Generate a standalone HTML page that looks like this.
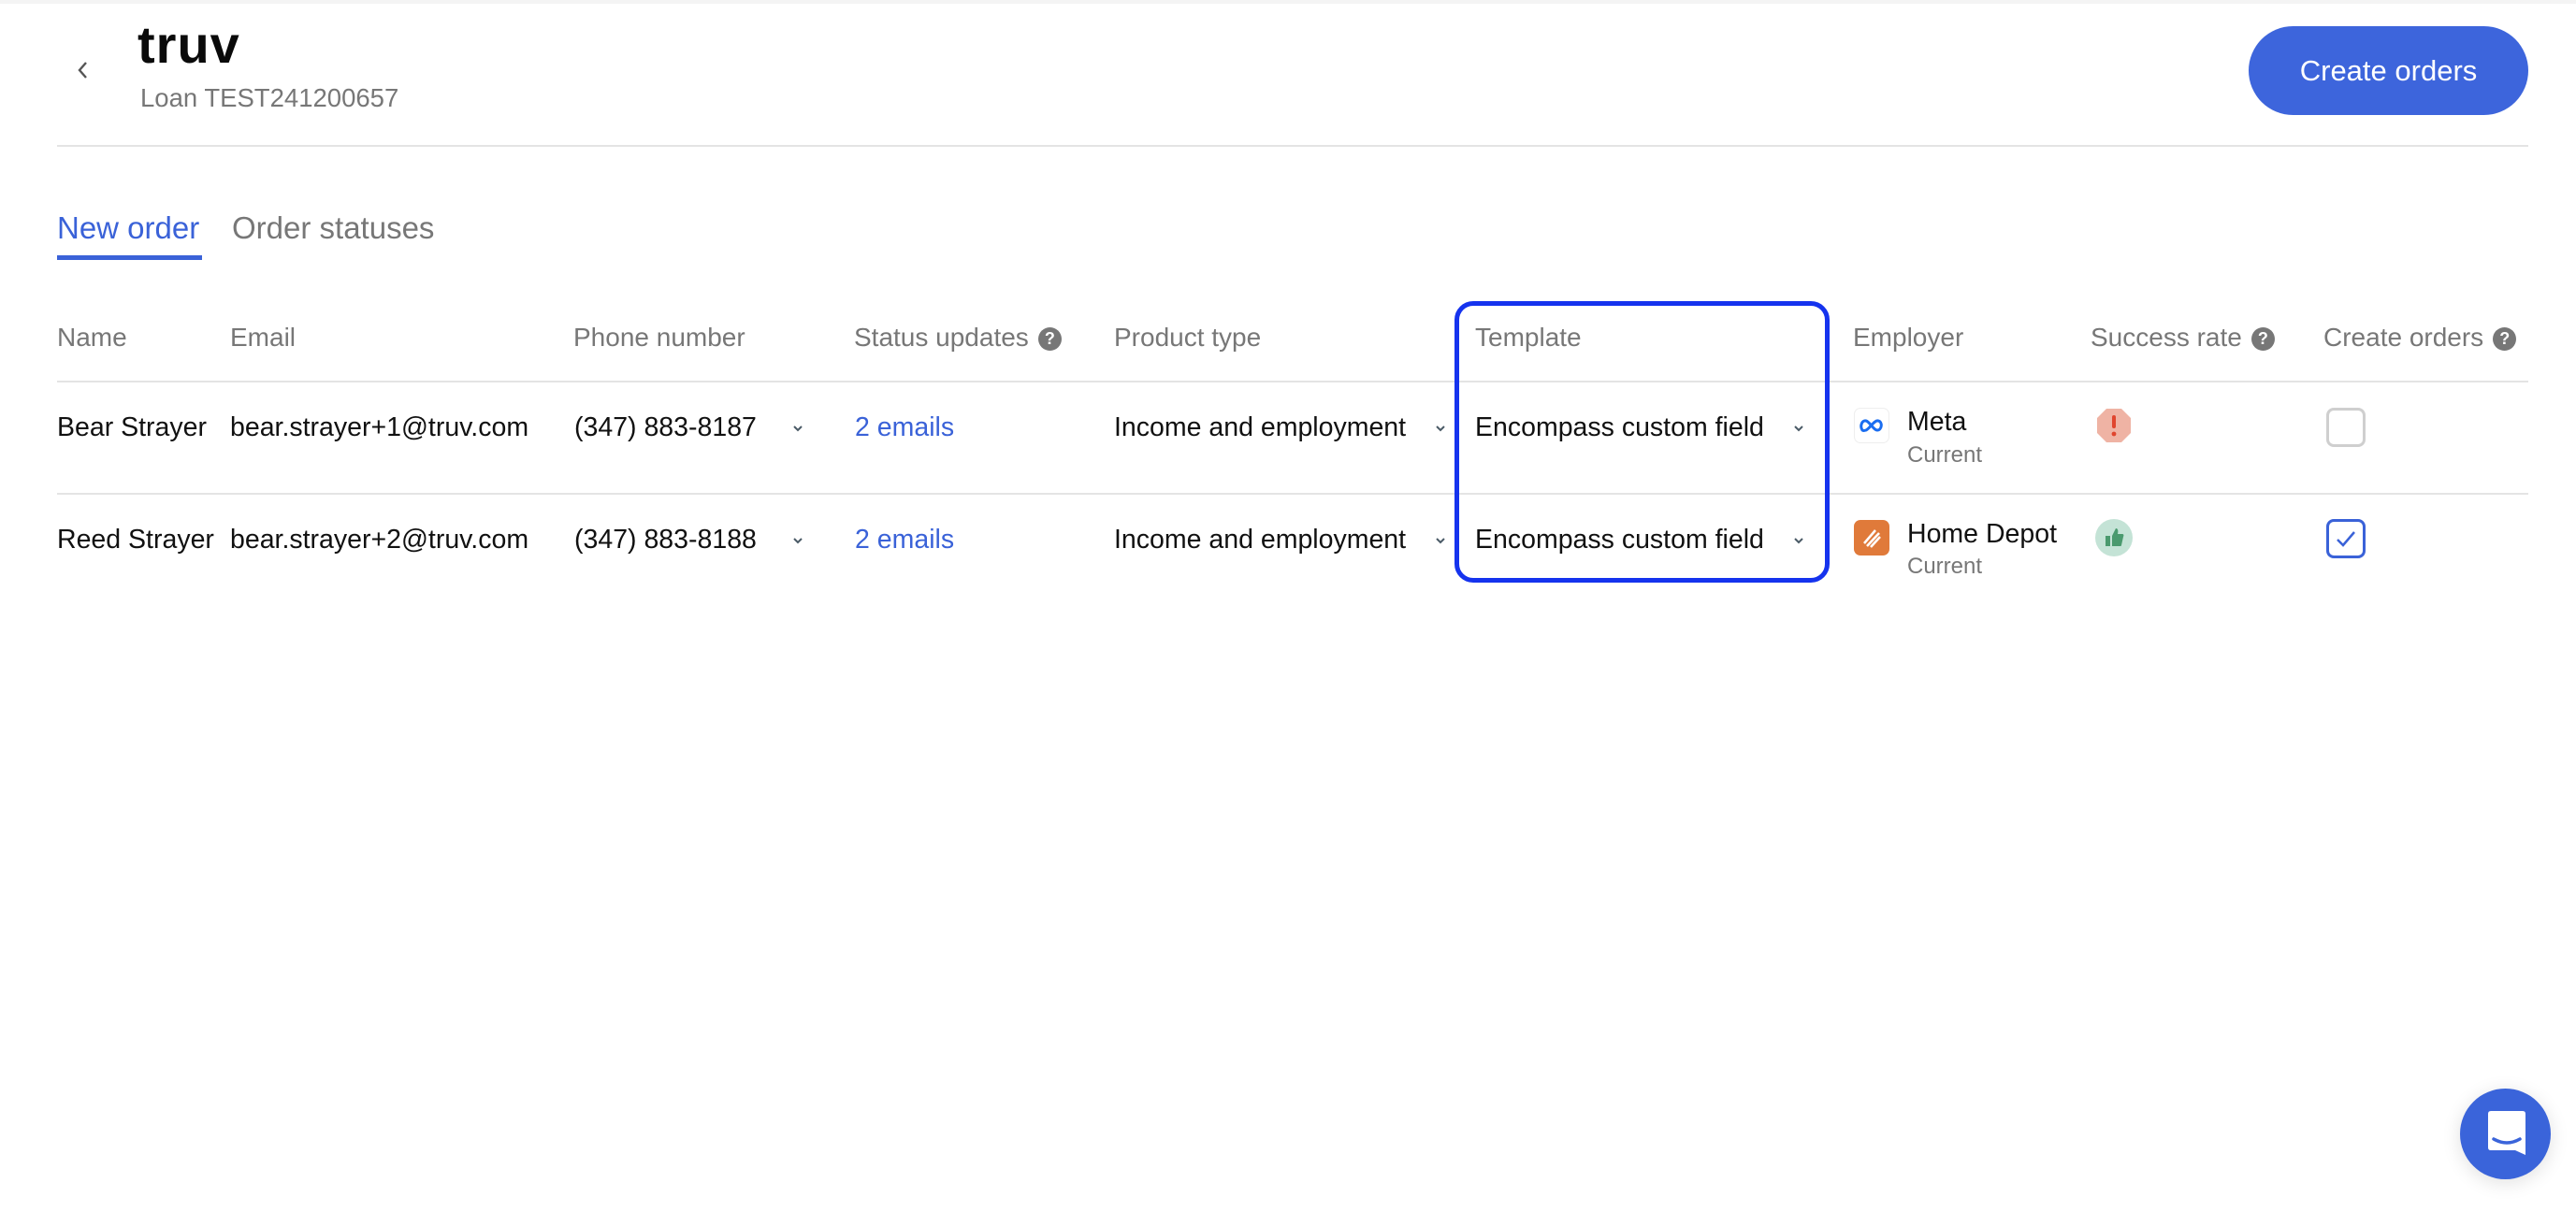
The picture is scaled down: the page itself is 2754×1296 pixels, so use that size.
<!DOCTYPE html>
<html><head><meta charset="utf-8"><style>
*{margin:0;padding:0;box-sizing:border-box}
body{width:2754px;height:1296px;background:#fff;font-family:"Liberation Sans",sans-serif;position:relative;overflow:hidden;color:#111}
.a{position:absolute;white-space:nowrap}
.h{font-size:28px;color:#777;line-height:1}
.t{font-size:28.5px;color:#111;line-height:1}
.q{display:inline-block;width:25px;height:25px;border-radius:50%;background:#777;color:#fff;font-size:18px;font-weight:bold;text-align:center;line-height:25px;vertical-align:2px;margin-left:10px}
.chev{position:absolute;width:12px;height:12px}
.line{position:absolute;left:61px;width:2642px;height:2px;background:#e4e4e4}
.sub{font-size:24px;color:#777;line-height:1}
</style></head><body>
<div class="a" style="left:0;top:0;width:2754px;height:4px;background:#f4f4f4"></div>
<svg class="a" style="left:80px;top:64px" width="16" height="22" viewBox="0 0 16 22"><path d="M12 3 L5 11 L12 19" fill="none" stroke="#555" stroke-width="2.4"/></svg>
<div class="a" style="left:147px;top:20px;font-size:56px;font-weight:bold;letter-spacing:1px;line-height:1;color:#0a0a0a">truv</div>
<div class="a" style="left:150px;top:91px;font-size:27.5px;color:#777;line-height:1">Loan TEST241200657</div>
<div class="a" style="left:2404px;top:28px;width:299px;height:95px;border-radius:48px;background:#3d65dc;color:#fff;font-size:31px;text-align:center;line-height:95px">Create orders</div>
<div class="line" style="top:155px"></div>
<div class="a" style="left:61px;top:227px;font-size:33px;color:#3a62d8;line-height:1">New order</div>
<div class="a" style="left:61px;top:273px;width:155px;height:5px;background:#3a62d8"></div>
<div class="a" style="left:248px;top:227px;font-size:33px;color:#777;line-height:1">Order statuses</div>

<div class="a h" style="left:61px;top:347px">Name</div>
<div class="a h" style="left:246px;top:347px">Email</div>
<div class="a h" style="left:613px;top:347px">Phone number</div>
<div class="a h" style="left:913px;top:347px">Status updates<span class="q">?</span></div>
<div class="a h" style="left:1191px;top:347px">Product type</div>
<div class="a h" style="left:1577px;top:347px">Template</div>
<div class="a h" style="left:1981px;top:347px">Employer</div>
<div class="a h" style="left:2235px;top:347px">Success rate<span class="q">?</span></div>
<div class="a h" style="left:2484px;top:347px">Create orders<span class="q">?</span></div>
<div class="line" style="top:407px"></div>

<div class="a t" style="left:61px;top:443px">Bear Strayer</div>
<div class="a t" style="left:246px;top:443px">bear.strayer+1@truv.com</div>
<div class="a t" style="left:614px;top:443px">(347) 883-8187</div>
<div class="a t" style="left:914px;top:443px;color:#3a62d8">2 emails</div>
<div class="a t" style="left:1191px;top:443px">Income and employment</div>
<div class="a t" style="left:1577px;top:443px">Encompass custom field</div>
<div class="line" style="top:527px"></div>
<div class="a t" style="left:61px;top:563px">Reed Strayer</div>
<div class="a t" style="left:246px;top:563px">bear.strayer+2@truv.com</div>
<div class="a t" style="left:614px;top:563px">(347) 883-8188</div>
<div class="a t" style="left:914px;top:563px;color:#3a62d8">2 emails</div>
<div class="a t" style="left:1191px;top:563px">Income and employment</div>
<div class="a t" style="left:1577px;top:563px">Encompass custom field</div>

<svg class="chev" style="left:847px;top:452px" viewBox="0 0 12 12"><path d="M2 4 L6 8 L10 4" fill="none" stroke="#4a5a66" stroke-width="2"/></svg>
<svg class="chev" style="left:847px;top:572px" viewBox="0 0 12 12"><path d="M2 4 L6 8 L10 4" fill="none" stroke="#4a5a66" stroke-width="2"/></svg>
<svg class="chev" style="left:1534px;top:452px" viewBox="0 0 12 12"><path d="M2 4 L6 8 L10 4" fill="none" stroke="#4a5a66" stroke-width="2"/></svg>
<svg class="chev" style="left:1534px;top:572px" viewBox="0 0 12 12"><path d="M2 4 L6 8 L10 4" fill="none" stroke="#4a5a66" stroke-width="2"/></svg>
<svg class="chev" style="left:1917px;top:452px" viewBox="0 0 12 12"><path d="M2 4 L6 8 L10 4" fill="none" stroke="#4a5a66" stroke-width="2"/></svg>
<svg class="chev" style="left:1917px;top:572px" viewBox="0 0 12 12"><path d="M2 4 L6 8 L10 4" fill="none" stroke="#4a5a66" stroke-width="2"/></svg>

<div class="a" style="left:1555px;top:322px;width:401px;height:301px;border:5px solid #1533ee;border-radius:20px"></div>

<div class="a" style="left:1982px;top:436px;width:38px;height:38px;border:1px solid #eee;border-radius:7px;background:#fff"></div>
<svg class="a" style="left:1987px;top:446px" width="28" height="18" viewBox="0 0 28 18"><path d="M4 14 C1 9 4 3 8 4 C12 5 16 14 20 14 C25 14 26 5 21 4 C17 3 12 12 8 14 C5 15 4 14 4 14Z" fill="none" stroke="#1a6df0" stroke-width="3"/></svg>
<div class="a" style="left:2039px;top:437px;font-size:28.5px;line-height:1">Meta</div>
<div class="a sub" style="left:2039px;top:475px">Current</div>
<div class="a" style="left:1982px;top:556px;width:38px;height:38px;border-radius:7px;background:#e07a3a"></div>
<svg class="a" style="left:1987px;top:561px" width="28" height="28" viewBox="0 0 28 28"><g stroke="#fff" stroke-width="2.5"><path d="M6 20 L18 6"/><path d="M9 23 L22 9"/><path d="M13 24 L23 13"/></g></svg>
<div class="a" style="left:2039px;top:557px;font-size:28.5px;line-height:1">Home Depot</div>
<div class="a sub" style="left:2039px;top:594px">Current</div>

<svg class="a" style="left:2241px;top:436px" width="38" height="38" viewBox="0 0 38 38"><polygon points="11,1 27,1 37,11 37,27 27,37 11,37 1,27 1,11" fill="#efb3a4"/><rect x="17" y="8" width="4" height="14" rx="2" fill="#e0452e"/><circle cx="19" cy="28" r="2.4" fill="#e0452e"/></svg>
<svg class="a" style="left:2240px;top:555px" width="40" height="40" viewBox="0 0 40 40"><circle cx="20" cy="20" r="20" fill="#c4e3d6"/><rect x="11" y="18" width="5" height="11" fill="#4a9a6e"/><path d="M18 18 L22 10 C24 10 25 12 24 16 L29 16 C30 16 31 17 30 19 L28 28 C28 29 27 29 26 29 L18 29Z" fill="#4a9a6e"/></svg>

<div class="a" style="left:2487px;top:436px;width:42px;height:42px;border:3px solid #cfcfcf;border-radius:8px"></div>
<div class="a" style="left:2487px;top:555px;width:42px;height:42px;border:3px solid #3a62d8;border-radius:8px"></div>
<svg class="a" style="left:2495px;top:565px" width="26" height="22" viewBox="0 0 26 22"><path d="M4 12 L10 18 L22 4" fill="none" stroke="#3a62d8" stroke-width="2.5"/></svg>

<div class="a" style="left:2630px;top:1164px;width:97px;height:97px;border-radius:50%;background:#3a64da;box-shadow:0 4px 20px rgba(0,0,0,.12)"></div>
<svg class="a" style="left:2659px;top:1188px" width="42" height="48" viewBox="0 0 42 48"><path d="M1 3 Q1 0 4 0 L38 0 Q41 0 41 3 L41 47 L30 42 L4 42 Q1 42 1 39Z" fill="#fff"/><path d="M7 30 Q21 38 35 30" fill="none" stroke="#3a64da" stroke-width="3.5" stroke-linecap="round"/></svg>
</body></html>
